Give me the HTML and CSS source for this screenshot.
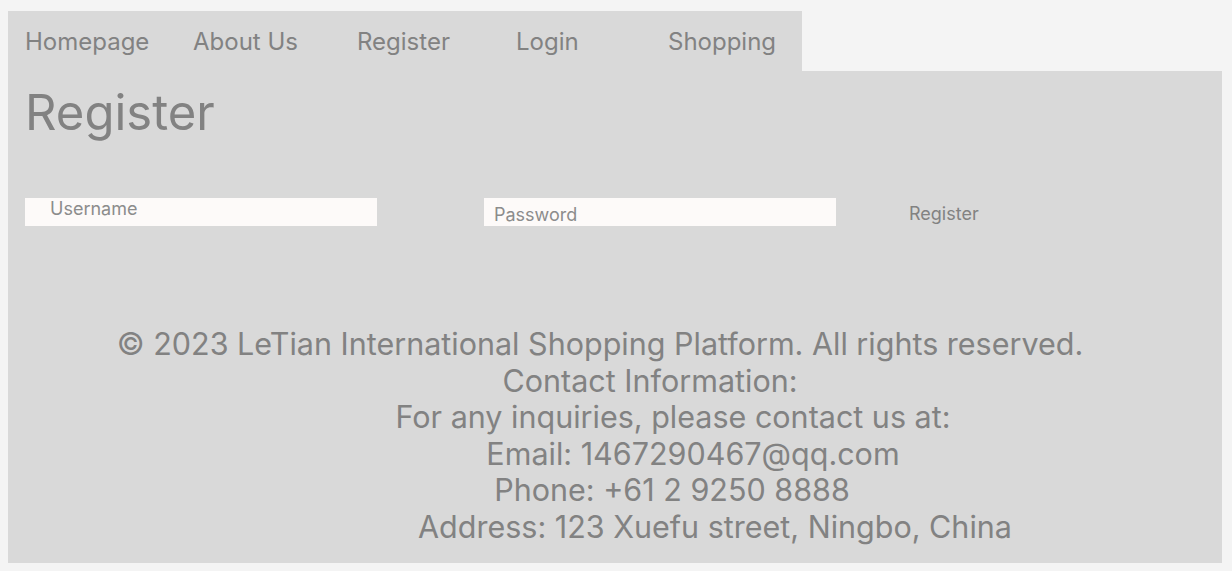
FILE: index.html
```html
<!DOCTYPE html>
<html lang="en">
<head>
<meta charset="utf-8">
<title>Register</title>
<link rel="stylesheet" href="styles.css">
</head>
<body>
<nav class="nav">
  <a class="nav-item" href="#">Homepage</a>
  <a class="nav-item" href="#">About Us</a>
  <a class="nav-item" href="#">Register</a>
  <a class="nav-item" href="#">Login</a>
  <a class="nav-item" href="#">Shopping</a>
</nav>
<main class="main">
  <h1 class="title">Register</h1>
  <form class="form">
    <div class="field field-user"><span class="ph">Username</span></div>
    <div class="field field-pass"><span class="ph">Password</span></div>
    <button type="button" class="btn">Register</button>
  </form>
  <footer class="footer">
    <p class="line l1">© 2023 LeTian International Shopping Platform. All rights reserved.</p>
    <p class="line l2">Contact Information:</p>
    <p class="line l3">For any inquiries, please contact us at:</p>
    <p class="line l4">Email: 1467290467@qq.com</p>
    <p class="line l5">Phone: +61 2 9250 8888</p>
    <p class="line l6">Address: 123 Xuefu street, Ningbo, China</p>
  </footer>
</main>
</body>
</html>
```

FILE: styles.css
```css
html, body {
  background: #f4f4f4;
}
body {
  margin: 11px 10px 8px 8px;
  font-family: Inter, "Noto Sans", sans-serif;
  color: #828282;
}
.nav {
  width: 794px;
  height: 60px;
  background: #d9d9d9;
  display: grid;
  grid-template-columns: 168px 164px 159px 152px 134px;
  padding-left: 17px;
  box-sizing: border-box;
  align-items: center;
}
.nav-item {
  font-size: 24px;
  color: #828282;
  text-decoration: none;
  line-height: 1;
  padding-top: 1px;
}
.main {
  background: #d9d9d9;
  height: 492px;
  padding: 0 0 0 17px;
  box-sizing: border-box;
  display: flex;
  flex-direction: column;
}
.title {
  margin: 13px 0 0 0;
  font-size: 49px;
  font-weight: 400;
  line-height: 58px;
}
.form {
  display: flex;
  align-items: flex-start;
  margin-top: 56px;
}
.field {
  width: 352px;
  height: 28px;
  background: #fdfaf9;
  box-sizing: border-box;
  font-size: 18px;
  color: #8c8c8c;
}
.field-user {
  padding: 0 0 0 25px;
}
.field-pass {
  margin-left: 107px;
  padding: 6px 0 0 10px;
}
.ph {
  line-height: 20px;
}
.btn {
  margin-left: 73px;
  margin-top: 6px;
  background: none;
  border: 0;
  padding: 0;
  font-family: inherit;
  font-size: 18px;
  color: #828282;
  line-height: 20px;
}
.footer {
  margin-top: 100px;
  margin-left: -17px;
  text-align: center;
  font-size: 30.5px;
  line-height: 36.6px;
}
.line {
  margin: 0;
}
.l1 { padding-right: 30px; }
.l2 { padding-left: 70px; }
.l3 { padding-left: 116px; }
.l4 { padding-left: 156px; }
.l5 { padding-left: 114px; }
.l6 { padding-left: 200px; }
```
